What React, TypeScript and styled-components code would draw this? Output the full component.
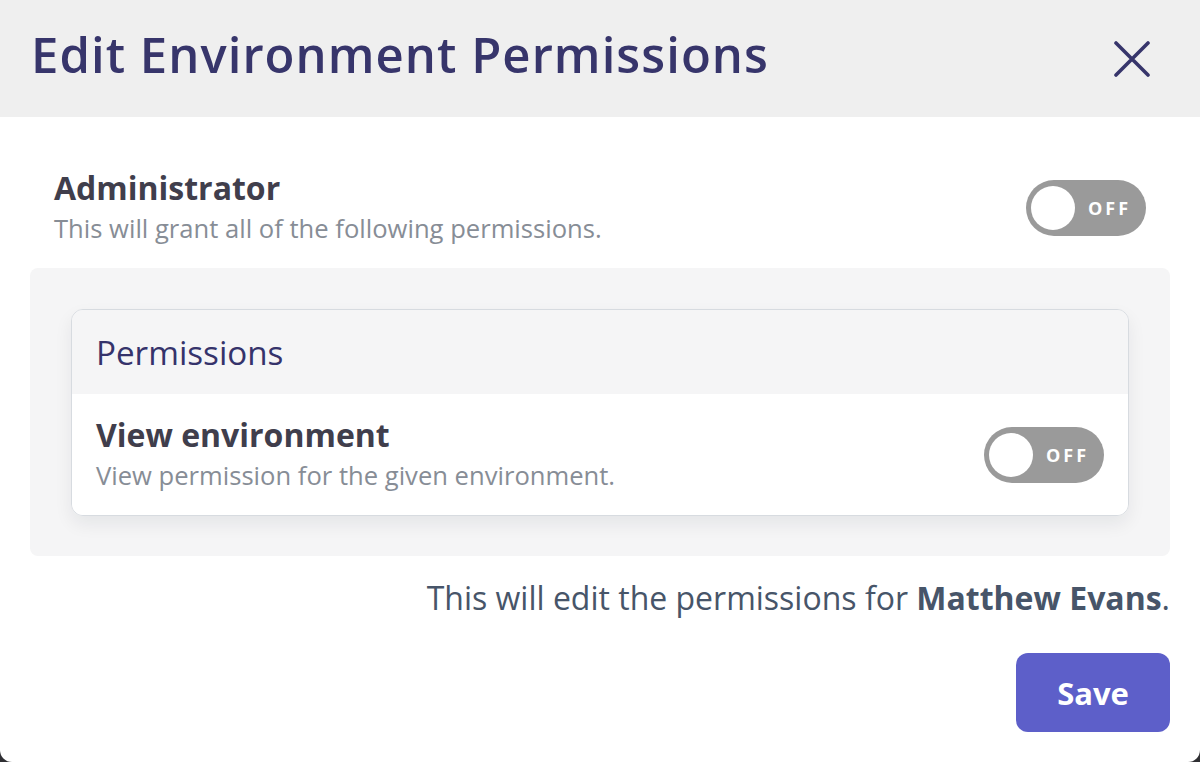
import React from "react";
import styled, { createGlobalStyle } from "styled-components";

const Global = createGlobalStyle`
  html, body { margin: 0; padding: 0; }
  body {
    background: #2f2f33;
    font-family: "Open Sans", "Noto Sans", sans-serif;
    -webkit-font-smoothing: antialiased;
  }
`;

const Modal = styled.div`
  width: 1200px;
  height: 762px;
  background: #ffffff;
  border-radius: 0 0 12px 12px;
  overflow: hidden;
  display: flex;
  flex-direction: column;
`;

const Header = styled.header`
  height: 117px;
  flex: none;
  background: #efefef;
  display: flex;
  align-items: center;
  justify-content: space-between;
  padding: 0 48px 0 31px;
  box-sizing: border-box;
`;

const Title = styled.h1`
  margin: 0;
  font-size: 49px;
  font-weight: 600;
  letter-spacing: 1.05px;
  color: #37356b;
  line-height: 1;
  padding-bottom: 8px;
`;

const CloseButton = styled.button`
  border: none;
  background: transparent;
  padding: 0;
  width: 40px;
  height: 40px;
  display: flex;
  align-items: center;
  justify-content: center;
  cursor: pointer;
`;

const Body = styled.div`
  padding: 30px 30px 0;
  display: flex;
  flex-direction: column;
`;

const SettingRow = styled.div<{ $height: number; $pad: number }>`
  height: ${(p) => p.$height}px;
  box-sizing: border-box;
  display: flex;
  align-items: center;
  justify-content: space-between;
  padding: 0 ${(p) => p.$pad}px;
  background: #ffffff;
`;

const TextBlock = styled.div`
  display: flex;
  flex-direction: column;
`;

const SettingTitle = styled.div`
  font-size: 32px;
  font-weight: 700;
  color: #403e4c;
  line-height: 40px;
`;

const SettingDesc = styled.div`
  font-size: 25.6px;
  font-weight: 400;
  color: #878d96;
  line-height: 36px;
  margin-top: 3px;
`;

const Panel = styled.div`
  background: #f5f5f6;
  border-radius: 8px;
  padding: 41px 41px 40px;
`;

const Card = styled.div`
  border: 1px solid #d7dbe0;
  border-radius: 12px;
  overflow: hidden;
  box-shadow: 0 8px 18px rgba(20, 24, 40, 0.07);
`;

const CardHeader = styled.div`
  height: 84px;
  background: #f5f5f6;
  display: flex;
  align-items: center;
  padding: 0 24px;
  font-size: 33.2px;
  font-weight: 500;
  color: #35336b;
`;

const Toggle = styled.div`
  width: 120px;
  height: 56px;
  border-radius: 28px;
  background: #9a9a9a;
  display: flex;
  align-items: center;
  padding: 0 0 0 5px;
  box-sizing: border-box;
  flex: none;
`;

const Knob = styled.div`
  width: 44px;
  height: 44px;
  border-radius: 50%;
  background: #ffffff;
  flex: none;
`;

const ToggleLabel = styled.span`
  flex: 1;
  text-align: center;
  color: #ffffff;
  font-size: 18px;
  font-weight: 700;
  letter-spacing: 3px;
  padding-right: 2px;
`;

const Note = styled.p`
  margin: 20px 0 0;
  text-align: right;
  font-size: 32px;
  line-height: 44px;
  color: #475569;
  font-weight: 400;
  b {
    font-weight: 700;
  }
`;

const Actions = styled.div`
  display: flex;
  justify-content: flex-end;
  margin-top: 33px;
`;

const SaveButton = styled.button`
  width: 154px;
  height: 79px;
  border: none;
  border-radius: 12px;
  background: #5d5fc9;
  color: #ffffff;
  font-family: "Open Sans", "Noto Sans", sans-serif;
  font-size: 31px;
  font-weight: 700;
  cursor: pointer;
`;

const OffToggle = () => (
  <Toggle>
    <Knob />
    <ToggleLabel>OFF</ToggleLabel>
  </Toggle>
);

export default function App() {
  return (
    <>
      <Global />
      <Modal>
        <Header>
          <Title>Edit Environment Permissions</Title>
          <CloseButton aria-label="Close">
            <svg width="36" height="36" viewBox="0 0 36 36">
              <path
                d="M2 2 L34 34 M34 2 L2 34"
                stroke="#37356b"
                strokeWidth="3.6"
                strokeLinecap="round"
              />
            </svg>
          </CloseButton>
        </Header>
        <Body>
          <SettingRow $height={121} $pad={24}>
            <TextBlock>
              <SettingTitle>Administrator</SettingTitle>
              <SettingDesc>This will grant all of the following permissions.</SettingDesc>
            </TextBlock>
            <OffToggle />
          </SettingRow>
          <Panel>
            <Card>
              <CardHeader>Permissions</CardHeader>
              <SettingRow $height={121} $pad={24}>
                <TextBlock>
                  <SettingTitle>View environment</SettingTitle>
                  <SettingDesc>View permission for the given environment.</SettingDesc>
                </TextBlock>
                <OffToggle />
              </SettingRow>
            </Card>
          </Panel>
          <Note>
            This will edit the permissions for <b>Matthew Evans</b>.
          </Note>
          <Actions>
            <SaveButton>Save</SaveButton>
          </Actions>
        </Body>
      </Modal>
    </>
  );
}
